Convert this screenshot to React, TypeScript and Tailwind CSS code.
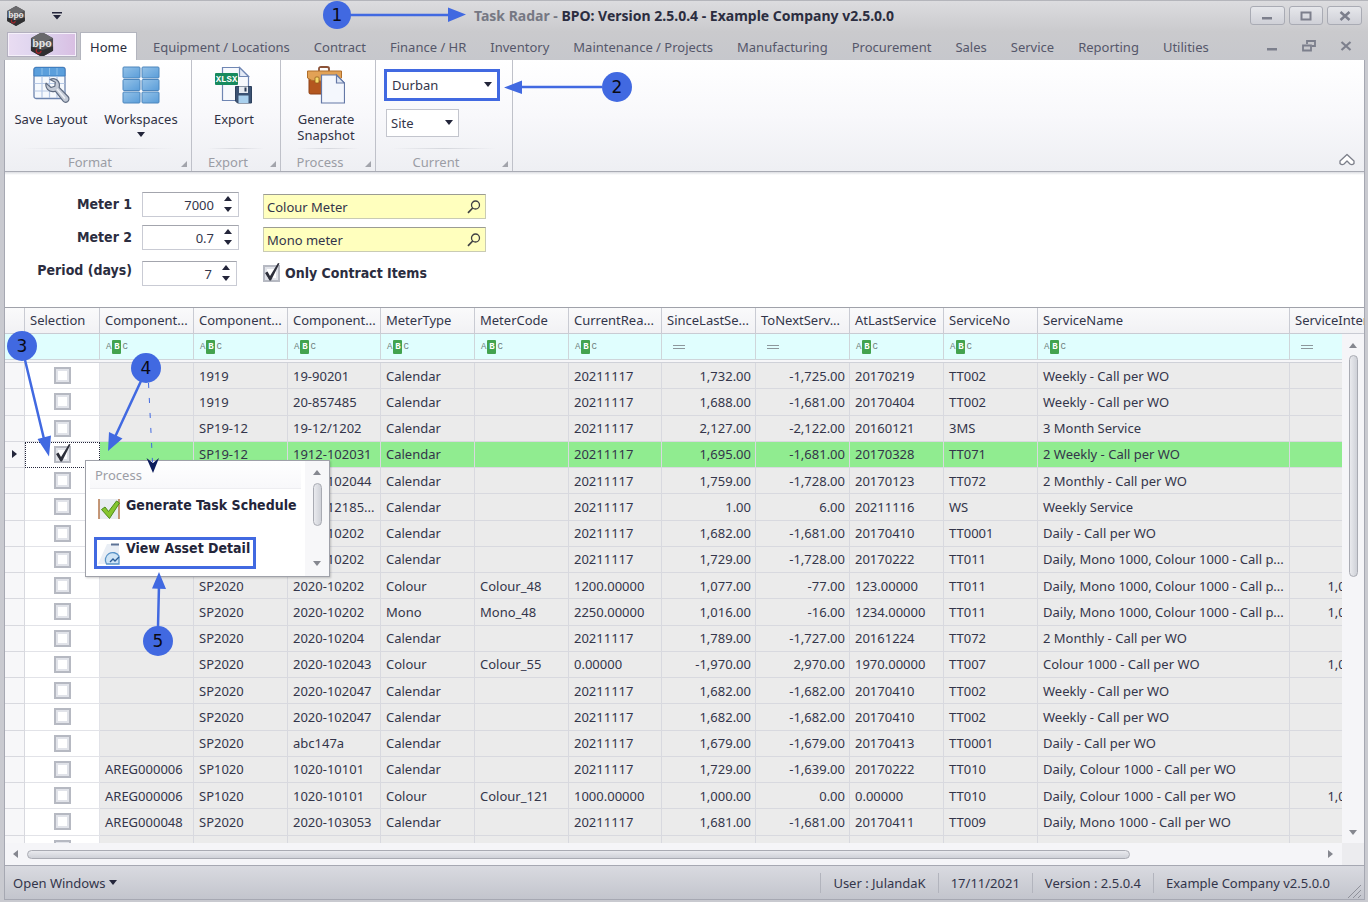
import { useState } from "react";
import type { ReactNode } from "react";
import clsx from "clsx";

type Row = {
  asset: string;
  part: string;
  serial: string;
  type: string;
  code: string;
  reading: string;
  since: string;
  next: string;
  last: string;
  serviceNo: string;
  serviceName: string;
  interval: string;
};

const TABS = [
  "Equipment / Locations",
  "Contract",
  "Finance / HR",
  "Inventory",
  "Maintenance / Projects",
  "Manufacturing",
  "Procurement",
  "Sales",
  "Service",
  "Reporting",
  "Utilities",
];

type Column = { label: string; width: string; filter?: "text" | "number" };

const COLUMNS: Column[] = [
  { label: "", width: "w-5" },
  { label: "Selection", width: "w-[75px]" },
  { label: "Component...", width: "w-[94px]", filter: "text" },
  { label: "Component...", width: "w-[94px]", filter: "text" },
  { label: "Component...", width: "w-[93px]", filter: "text" },
  { label: "MeterType", width: "w-[94px]", filter: "text" },
  { label: "MeterCode", width: "w-[94px]", filter: "text" },
  { label: "CurrentRea...", width: "w-[93px]", filter: "text" },
  { label: "SinceLastSe...", width: "w-[94px]", filter: "number" },
  { label: "ToNextServ...", width: "w-[94px]", filter: "number" },
  { label: "AtLastService", width: "w-[94px]", filter: "text" },
  { label: "ServiceNo", width: "w-[94px]", filter: "text" },
  { label: "ServiceName", width: "w-[252px]", filter: "text" },
  { label: "ServiceInterval", width: "w-[94px]", filter: "number" },
];

function row(...v: string[]): Row {
  const [asset, part, serial, type, code, reading, since, next, last, serviceNo, serviceName, interval = ""] = v;
  return { asset, part, serial, type, code, reading, since, next, last, serviceNo, serviceName, interval };
}

const LONG_NAME = "Daily, Mono 1000, Colour 1000 - Call p...";

const ROWS: Row[] = [
  row("", "1919", "19-90201", "Calendar", "", "20211117", "1,732.00", "-1,725.00", "20170219", "TT002", "Weekly - Call per WO"),
  row("", "1919", "20-857485", "Calendar", "", "20211117", "1,688.00", "-1,681.00", "20170404", "TT002", "Weekly - Call per WO"),
  row("", "SP19-12", "19-12/1202", "Calendar", "", "20211117", "2,127.00", "-2,122.00", "20160121", "3MS", "3 Month Service"),
  row("", "SP19-12", "1912-102031", "Calendar", "", "20211117", "1,695.00", "-1,681.00", "20170328", "TT071", "2 Weekly - Call per WO"),
  row("", "SP19-12", "1912-102044", "Calendar", "", "20211117", "1,759.00", "-1,728.00", "20170123", "TT072", "2 Monthly - Call per WO"),
  row("", "SP19-12", "1912-12185...", "Calendar", "", "20211117", "1.00", "6.00", "20211116", "WS", "Weekly Service"),
  row("", "SP2020", "2020-10202", "Calendar", "", "20211117", "1,682.00", "-1,681.00", "20170410", "TT0001", "Daily - Call per WO"),
  row("", "SP2020", "2020-10202", "Calendar", "", "20211117", "1,729.00", "-1,728.00", "20170222", "TT011", LONG_NAME),
  row("", "SP2020", "2020-10202", "Colour", "Colour_48", "1200.00000", "1,077.00", "-77.00", "123.00000", "TT011", LONG_NAME, "1,000.00"),
  row("", "SP2020", "2020-10202", "Mono", "Mono_48", "2250.00000", "1,016.00", "-16.00", "1234.00000", "TT011", LONG_NAME, "1,000.00"),
  row("", "SP2020", "2020-10204", "Calendar", "", "20211117", "1,789.00", "-1,727.00", "20161224", "TT072", "2 Monthly - Call per WO"),
  row("", "SP2020", "2020-102043", "Colour", "Colour_55", "0.00000", "-1,970.00", "2,970.00", "1970.00000", "TT007", "Colour 1000 - Call per WO", "1,000.00"),
  row("", "SP2020", "2020-102047", "Calendar", "", "20211117", "1,682.00", "-1,682.00", "20170410", "TT002", "Weekly - Call per WO"),
  row("", "SP2020", "2020-102047", "Calendar", "", "20211117", "1,682.00", "-1,682.00", "20170410", "TT002", "Weekly - Call per WO"),
  row("", "SP2020", "abc147a", "Calendar", "", "20211117", "1,679.00", "-1,679.00", "20170413", "TT0001", "Daily - Call per WO"),
  row("AREG000006", "SP1020", "1020-10101", "Calendar", "", "20211117", "1,729.00", "-1,639.00", "20170222", "TT010", "Daily, Colour 1000 - Call per WO"),
  row("AREG000006", "SP1020", "1020-10101", "Colour", "Colour_121", "1000.00000", "1,000.00", "0.00", "0.00000", "TT010", "Daily, Colour 1000 - Call per WO", "1,000.00"),
  row("AREG000048", "SP2020", "2020-103053", "Calendar", "", "20211117", "1,681.00", "-1,681.00", "20170411", "TT009", "Daily, Mono 1000 - Call per WO"),
  row("", "", "", "Calendar", "", "", "", "", "", "", "2 Weekly, Mono 1000 - Call per WO"),
];

const Caret = ({ className, dir = "down" }: { className?: string; dir?: "up" | "down" | "left" | "right" }) => {
  const paths = {
    down: "M0 1h8L4 6z",
    up: "M0 6h8L4 1z",
    left: "M6 0v8L1 4z",
    right: "M1 0v8l5-4z",
  };
  return (
    <svg viewBox="0 0 8 8" className={clsx("h-2 w-2 shrink-0", className)} fill="currentColor" aria-hidden="true">
      <path d={paths[dir]} />
    </svg>
  );
};

const HexLogo = ({ className }: { className?: string }) => (
  <svg viewBox="0 0 24 26" className={className} aria-hidden="true">
    <path d="M12 0 23.500 6.500v13L12 26 .5 19.500v-13z" fill="#4a4a4d" />
    <path d="M12 0 23.500 6.500 12 11 .5 6.500z" fill="#69696c" />
    <path d="M.5 15 12 19l11.500-4v4.500L12 26 .5 19.500z" fill="#2f2f31" />
    <path d="M7 17.500a2.500 2.500 0 1 0 4 2" stroke="#a3262c" strokeWidth="1.500" fill="none" />
    <text x="12" y="15.500" textAnchor="middle" fontSize="11" fontWeight="700" fill="#e3e3e3" fontFamily="Liberation Sans, sans-serif">
      bpo
    </text>
    <path d="M3 12.500h18" stroke="#e3e3e3" strokeWidth=".8" />
  </svg>
);

const SaveLayoutIcon = () => (
  <svg viewBox="0 0 38 38" className="h-[38px] w-[38px]" aria-hidden="true">
    <rect x="2" y="1.500" width="31" height="31" rx="2" fill="#f6f9fd" stroke="#6d84ae" strokeWidth="1.300" />
    <path d="M2 3.500a2 2 0 0 1 2-2h27a2 2 0 0 1 2 2V10H2z" fill="#5b9fdc" stroke="#3f7fc0" />
    <path d="M10 2v7M17.500 2v7M25 2v7" stroke="#8dc0ea" />
    <path d="M10 10.500V32M17.500 10.500V32M25 10.500V32M2.500 17.500h30M2.500 25h30" stroke="#b7c9e6" strokeWidth="1.200" />
    <path
      d="M18 13.500c3-1.500 6.500-.8 8.300 1.800 1.300 2 1.400 4 .8 6L36 30.500c1.500 1.800 1 4-.3 5-1.400 1-3.400.8-4.700-.7l-7.700-9.600c-2.800.9-5.800.4-7.800-1.800-1.500-1.700-2-4-1.400-6.300l4.900 4.400 3.800-1.300.5-4z"
      fill="#c3cad6"
      stroke="#5f6b80"
      strokeWidth="1.200"
      strokeLinejoin="round"
    />
    <path d="m25 23 8 9.500" stroke="#eef1f6" strokeWidth="1.500" />
  </svg>
);

const WorkspacesIcon = () => (
  <svg viewBox="0 0 38 38" className="h-[38px] w-[38px]" aria-hidden="true">
    <defs>
      <linearGradient id="tile" x1="0" y1="0" x2="1" y2="1">
        <stop offset="0" stopColor="#94c2e8" />
        <stop offset="1" stopColor="#5a9dd9" />
      </linearGradient>
    </defs>
    {[1, 13.5, 26].map((y) =>
      [1, 20].map((x) => (
        <rect key={`${x}-${y}`} x={x} y={y} width="17" height="11" rx="1" fill="url(#tile)" stroke="#4d86bd" />
      )),
    )}
  </svg>
);

const ExportIcon = () => (
  <svg viewBox="0 0 38 38" className="h-[38px] w-[38px]" aria-hidden="true">
    <path d="M7.500 1.500h17l9 9v24h-26z" fill="#f7f9fd" stroke="#6f86b3" strokeWidth="1.200" />
    <path d="M24.500 1.500v9h9z" fill="#e3eaf6" stroke="#6f86b3" strokeWidth="1.200" />
    <rect x="0" y="7" width="23" height="12" rx="1" fill="#178a5e" />
    <text x="11.500" y="16.300" textAnchor="middle" fontSize="9" fontWeight="700" fill="#fff" fontFamily="Liberation Mono, monospace">
      XLSX
    </text>
    <path d="M20.500 20.500h16v16.500h-14l-2-2z" fill="#3b5273" stroke="#2d405d" />
    <rect x="24" y="20.500" width="9" height="6.500" fill="#e7ebf1" />
    <rect x="29.500" y="21.500" width="2" height="4" fill="#2b3b55" />
    <rect x="23.500" y="29.500" width="10" height="7.500" fill="#a9d0ee" />
  </svg>
);

const SnapshotIcon = () => (
  <svg viewBox="0 0 38 38" className="h-[38px] w-[38px]" aria-hidden="true">
    <path d="M12 5V2.500Q12 1 14 1h6q2 0 2 1.500V5" fill="none" stroke="#8b5237" strokeWidth="1.800" />
    <rect x="2" y="10" width="31" height="18" rx="1.500" fill="#b4571f" stroke="#8e4318" />
    <path d="M.5 5h34v7q-4 3-9 3H10q-6 0-9.500-3z" fill="#e2a256" stroke="#b06f2c" />
    <rect x="8" y="11" width="4" height="6" rx="1" fill="#f7d968" stroke="#8e5a1c" strokeWidth=".8" />
    <path d="M14.500 9h15l8 8v20h-23z" fill="#f4f7fd" stroke="#6478a6" strokeWidth="1.200" />
    <path d="M29.500 9v8h8z" fill="#dfe7f5" stroke="#6478a6" strokeWidth="1.200" />
  </svg>
);

const SearchIcon = () => (
  <svg viewBox="0 0 14 14" className="h-[14px] w-[14px]" fill="none" stroke="#3f4043" aria-hidden="true">
    <circle cx="8.500" cy="5" r="4" strokeWidth="1.300" />
    <path d="M5.700 8 1 12.800" strokeWidth="1.700" />
  </svg>
);

const ScheduleIcon = () => (
  <svg viewBox="0 0 22 22" className="h-[22px] w-[22px]" aria-hidden="true">
    <rect x="1" y="1" width="20" height="20" fill="#e8ecf1" />
    <path d="M1 1v20M21 1v20" stroke="#b4774c" strokeWidth="1.500" />
    <path d="m3.500 11.500 3.500-2.500 3.500 4.500L18.500 3l3 2-10 15.500z" fill="#86c52f" stroke="#4c8a1c" strokeLinejoin="round" />
  </svg>
);

const AssetIcon = () => (
  <svg viewBox="0 0 22 22" className="h-[22px] w-[22px]" aria-hidden="true">
    <path d="M0 21 9 1h12v20z" fill="#e9eef5" />
    <path d="M13 1.500h8" stroke="#5d7396" strokeWidth="2" />
    <path d="M8.500 21a7 7 0 0 1 12.500-8v8z" fill="#cfe4f5" stroke="#5a94c8" strokeWidth="1.300" />
    <path d="m12 19 3-3 2 2 4-4" stroke="#2c5e98" strokeWidth="1.300" fill="none" />
  </svg>
);

const RibbonGroup = ({ title, width, children }: { title: string; width: string; children: ReactNode }) => (
  <section className={clsx("relative flex shrink-0 flex-col border-r border-[#bfc1c9]", width)} aria-label={title}>
    <div className="flex flex-1 items-start justify-center pt-[6px] pr-1">{children}</div>
    <div className="mx-4 h-px bg-linear-to-r from-transparent via-[#d4d6dc] to-transparent" />
    <h2 className="h-[22px] pr-4 text-center leading-[26px] text-[#9b9da5]">{title}</h2>
    <svg viewBox="0 0 6 6" className="absolute right-1 bottom-1 h-[6px] w-[6px]" aria-hidden="true">
      <path d="M6 0v6H0z" fill="#a2a4ab" />
    </svg>
  </section>
);

const RibbonButton = ({ icon, label, menu }: { icon: ReactNode; label: string; menu?: boolean }) => (
  <button type="button" className="flex w-[90px] flex-col items-center">
    {icon}
    <span className="mt-[7px] leading-4 whitespace-pre text-[#2f3144]">{label}</span>
    {menu && <Caret className="mt-1 text-[#23253a]" />}
  </button>
);

const Spinner = ({ id, initial, narrow }: { id: string; initial: string; narrow?: boolean }) => {
  const [value, setValue] = useState(initial);
  const step = (by: number) => setValue(String(Number(value) + by));
  return (
    <div
      className={clsx(
        "flex h-[25px] border border-[#c9cbd4] border-t-[#a3a5ad] bg-white",
        narrow ? "mt-[3px] w-[95px]" : "w-[97px]",
      )}
    >
      <input
        id={id}
        value={value}
        onChange={(e) => setValue(e.target.value)}
        className="w-full min-w-0 text-right outline-none"
      />
      <div className="flex w-6 shrink-0 flex-col items-center justify-between py-[2px] pl-1 text-[#23253a]">
        <button type="button" aria-label="Increase" onClick={() => step(1)}>
          <Caret dir="up" className="block" />
        </button>
        <button type="button" aria-label="Decrease" onClick={() => step(-1)}>
          <Caret className="block" />
        </button>
      </div>
    </div>
  );
};

const Lookup = ({ value, label }: { value: string; label: string }) => (
  <div className="flex h-[25px] items-center border border-[#c9cbb4] border-t-[#9b9c93] bg-[#ffffbe] pr-1">
    <input aria-label={label} defaultValue={value} className="w-full min-w-0 bg-transparent pl-[3px] outline-none" />
    <button type="button" aria-label={`Find ${label}`}>
      <SearchIcon />
    </button>
  </div>
);

const CheckBox = ({ id, label, checked }: { id?: string; label?: string; checked?: boolean }) => (
  <span className="relative inline-block h-[17px] w-[17px] align-middle">
    <input
      id={id}
      type="checkbox"
      aria-label={label}
      defaultChecked={checked}
      className="peer block h-[17px] w-[17px] appearance-none border-2 border-[#b6b9c2] bg-white inset-ring-2 inset-ring-[#e1e3e9]"
    />
    <svg viewBox="0 0 17 19" className="pointer-events-none absolute -top-[2px] left-0 hidden h-[19px] w-[17px] peer-checked:block" aria-hidden="true">
      <path d="m2 10 2.500-1.500L7 13 15 0l1.500.5L8 17.500H6.500z" fill="#2d2f3a" />
    </svg>
  </span>
);

const FilterMark = ({ kind }: { kind: "text" | "number" }) =>
  kind === "text" ? (
    <span className="flex items-center gap-px pl-px font-['Liberation_Mono',monospace] text-[9px] leading-[14px] text-[#6f7f80]">
      <span>A</span>
      <span className="w-[9px] rounded-[1px] bg-[#43a34f] text-center font-bold text-white">B</span>
      <span>C</span>
    </span>
  ) : (
    <svg viewBox="0 0 12 6" className="ml-[6px] h-[6px] w-3" stroke="#8d979c" aria-hidden="true">
      <path d="M0 1.500h12M0 4.500h12" />
    </svg>
  );

const MeterGrid = () => {
  const cell = "truncate border-r border-b border-[#d8d9df] px-[5px] py-0";
  const numberCell = "truncate border-r border-b border-[#d8d9df] py-0 pr-1 pl-[5px] text-right";
  const [current, setCurrent] = useState(3);
  return (
    <div className="relative min-h-0 flex-1 overflow-hidden border-t border-[#a0a2aa]">
      <table className="h-[554px] w-[1379px] table-fixed border-separate border-spacing-0">
        <colgroup>
          {COLUMNS.map((c, i) => (
            <col key={i} className={c.width} />
          ))}
        </colgroup>
        <thead>
          <tr className="h-[26px] bg-linear-to-b from-[#fafafb] to-[#f1f1f4]">
            {COLUMNS.map((c, i) => (
              <th
                key={i}
                scope="col"
                className="overflow-hidden border-r border-b border-[#c9cbd3] p-0 pb-[2px] pl-[5px] text-left font-normal"
              >
                {c.label}
              </th>
            ))}
          </tr>
          <tr className="h-[26px] bg-[#e0fefe]">
            {COLUMNS.map((c, i) => (
              <td key={i} className="border-r border-b border-[#cfd5da] p-0 pl-[5px]">
                {c.filter && <FilterMark kind={c.filter} />}
              </td>
            ))}
          </tr>
          <tr className="h-[3px]">
            <td colSpan={COLUMNS.length} className="h-[3px] border-b border-[#cfd1d8] bg-[#f6f6f8] p-0" />
          </tr>
        </thead>
        <tbody>
          {ROWS.map((r, i) => (
            <tr key={i} onClick={() => setCurrent(i)} className={current === i ? "bg-[#90ec90]" : "bg-[#ebebeb]"}>
              <td className="border-r border-b border-[#d8d9df] bg-[#f7f7f9] p-0">
                {current === i && <Caret dir="right" className="mx-auto block text-[#23253a]" />}
              </td>
              <td
                className={clsx(
                  "bg-white p-0 pb-px text-center leading-[17px]",
                  current === i ? "border border-dotted border-[#23253a]" : "border-r border-b border-[#e2e3e8]",
                )}
              >
                <CheckBox label={`Select row ${i + 1}`} checked={i === 3} />
              </td>
              <td className={cell}>{r.asset}</td>
              <td className={cell}>{r.part}</td>
              <td className={cell}>{r.serial}</td>
              <td className={cell}>{r.type}</td>
              <td className={cell}>{r.code}</td>
              <td className={cell}>{r.reading}</td>
              <td className={numberCell}>{r.since}</td>
              <td className={numberCell}>{r.next}</td>
              <td className={cell}>{r.last}</td>
              <td className={cell}>{r.serviceNo}</td>
              <td className={cell}>{r.serviceName}</td>
              <td className={numberCell}>{r.interval}</td>
            </tr>
          ))}
        </tbody>
      </table>

      {/* Scroll bars */}
      <div className="absolute top-[26px] right-0 bottom-0 flex w-[22px] flex-col items-center bg-[#f5f5f8] pt-2 text-[#85878f]">
        <Caret dir="up" />
        <div className="mt-[5px] h-[222px] w-[9px] rounded-full border border-[#a9abb3] bg-linear-to-r from-[#e9eaee] to-[#cfd1d8]" />
        <Caret className="mt-auto mb-7" />
      </div>
      <div className="absolute right-[22px] bottom-0 left-0 flex h-[22px] items-center bg-[#f5f5f8] px-[7px] text-[#85878f]">
        <Caret dir="left" />
        <div className="mr-auto ml-[7px] h-[9px] w-5/6 rounded-full border border-[#a9abb3] bg-linear-to-b from-[#e9eaee] to-[#cfd1d8]" />
        <Caret dir="right" />
      </div>
      <div className="absolute right-0 bottom-0 h-[22px] w-[22px] bg-[#ececef]" />
    </div>
  );
};

const ProcessMenu = () => (
  <div className="absolute top-[460px] left-[85px] flex h-[117px] w-[245px] border border-[#9fa1a9] bg-white shadow-[1px_1px_2px_rgba(0,0,0,0.2)]">
    <div className="min-w-0 flex-1">
      <h3 className="mx-1 h-7 border-b border-[#eeeef1] bg-linear-to-b from-white to-[#f8f8fa] pl-[5px] leading-7 text-[#9b9da5]">
        Process
      </h3>
      <button type="button" className="mt-1 ml-3 flex h-6 items-center gap-[6px] font-bold whitespace-nowrap text-[#23253a]">
        <span className="pt-2">
          <ScheduleIcon />
        </span>
        <span className="font-['DejaVu_Sans_Condensed','Noto_Sans',sans-serif] text-[14px]">Generate Task Schedule</span>
      </button>
      <button
        type="button"
        className="mt-5 ml-2 flex h-8 w-[162px] items-start gap-[6px] border-3 border-[#4169e1] bg-white pl-px font-bold whitespace-nowrap text-[#23253a]"
      >
        <span className="pt-[3px]">
          <AssetIcon />
        </span>
        <span className="font-['DejaVu_Sans_Condensed','Noto_Sans',sans-serif] text-[14px] leading-[17px]">View Asset Detail</span>
      </button>
    </div>
    <div className="flex w-6 shrink-0 flex-col items-center bg-[#f7f7f9] py-2 text-[#85878f]">
      <Caret dir="up" />
      <div className="mt-[6px] h-[43px] w-[9px] rounded-full border border-[#a9abb3] bg-linear-to-r from-[#e9eaee] to-[#cfd1d8]" />
      <Caret className="mt-auto" />
    </div>
  </div>
);

const MARKERS = [
  { n: 1, x: 337, y: 15, r: 14 },
  { n: 2, x: 617, y: 87, r: 15 },
  { n: 3, x: 22, y: 346, r: 15 },
  { n: 4, x: 146, y: 368, r: 15 },
  { n: 5, x: 158, y: 641, r: 15 },
];

// Numbered callouts drawn over the window
const Callouts = () => (
  <svg viewBox="0 0 1368 902" className="pointer-events-none absolute top-0 left-0 h-[902px] w-[1368px]" fill="#4169e1" aria-hidden="true">
    <g stroke="#4169e1" strokeWidth="2.500">
      <path d="M350 15h100M602 87h-84M25 360l19 79M141 381l-26 56M158 627l1-42" fill="none" />
    </g>
    <path d="M448 7.500 466 14.500 448 22zM522 80.500 504 87.500 522 94zM37.500 439 51 435.500 49 456.500zM109 432 122.500 438.500 108 451zM152 588.500 166 589 159 572z" />
    <path d="M148.500 383 152.500 462" fill="none" stroke="#4169e1" strokeDasharray="5 10" />
    <path d="m146.500 458 6.500 15 6-15-6 5z" fill="#0c1c5c" />
    {MARKERS.map((m) => (
      <g key={m.n}>
        <circle cx={m.x} cy={m.y} r={m.r} />
        <text x={m.x} y={m.y + 6} textAnchor="middle" fontSize="17" fill="#0a0a14" fontFamily="DejaVu Sans, sans-serif">
          {m.n}
        </text>
      </g>
    ))}
  </svg>
);

const App = () => {
  const windowButton =
    "flex h-[19px] w-[35px] items-center justify-center rounded-[3px] border border-[#a9abb4] bg-linear-to-b from-[#e6e7eb] to-[#cfd0d7] text-[#7c7f8c]";
  return (
    <div className="relative flex h-screen min-h-[902px] flex-col overflow-hidden bg-[#c9cad0] font-['Noto_Sans','DejaVu_Sans',sans-serif] text-[13px] leading-5 text-[#33354a]">
      {/* Title bar */}
      <header className="flex h-8 shrink-0 items-center justify-between border-t border-[#b4b5bb] bg-linear-to-b from-[#dcdcdf] to-[#cacacd] px-[6px] pb-[2px]">
        <div className="flex w-28 items-center">
          <HexLogo className="h-5 w-5" />
          <svg viewBox="0 0 10 8" className="ml-[26px] h-2 w-[10px]" fill="#23253a" aria-hidden="true">
            <path d="M0 0h10v1.500H0zM1 3h8L5 7.500z" />
          </svg>
        </div>
        <h1 className="text-[14px] font-bold text-[#2b2d40]">
          <span className="text-[#767883]">Task Radar - </span>BPO: Version 2.5.0.4 - Example Company v2.5.0.0
        </h1>
        <div className="flex w-28 justify-end gap-1">
          <button type="button" aria-label="Minimize" className={windowButton}>
            <svg viewBox="0 0 12 10" className="h-[10px] w-3">
              <path d="M1 6h10v2.500H1z" fill="currentColor" />
            </svg>
          </button>
          <button type="button" aria-label="Maximize" className={windowButton}>
            <svg viewBox="0 0 12 10" className="h-[10px] w-3" fill="none" stroke="currentColor" strokeWidth="2">
              <rect x="1.500" y="1.500" width="9" height="7" />
            </svg>
          </button>
          <button type="button" aria-label="Close" className={windowButton}>
            <svg viewBox="0 0 12 10" className="h-[10px] w-3" stroke="currentColor" strokeWidth="2.500">
              <path d="m1.500 1 9 8m0-8-9 8" />
            </svg>
          </button>
        </div>
      </header>

      {/* Ribbon tabs */}
      <nav className="flex h-7 shrink-0 items-center bg-linear-to-b from-[#cacacd] to-[#c6c7cc] pr-4 pl-2 whitespace-nowrap text-[#55576a]">
        <button
          type="button"
          aria-label="Application menu"
          className="mt-px mr-1 flex h-[23px] w-[68px] items-center justify-center self-start border border-[#f5f0fa] bg-linear-to-r from-[#e9dcf2] via-[#dcd3ee] to-[#d9bfe3] outline outline-[#b3b0bf]"
        >
          <HexLogo className="h-[25px] w-6" />
        </button>
        <a href="#home" className="mr-1 flex h-7 items-center border-x border-t border-[#b3b5be] bg-white px-[9px] text-[#2b2d40]">
          Home
        </a>
        {TABS.map((t) => (
          <a key={t} href={`#${t.split(" ")[0].toLowerCase()}`} className="px-3 pt-px">
            {t}
          </a>
        ))}
        <div className="ml-auto flex items-center gap-6 text-[#7c7f8c]">
          <button type="button" aria-label="Minimize document">
            <svg viewBox="0 0 12 12" className="block h-3 w-3">
              <path d="M1 8h10v2.500H1z" fill="currentColor" />
            </svg>
          </button>
          <button type="button" aria-label="Restore document">
            <svg viewBox="0 0 14 12" className="block h-3 w-[14px]" fill="none" stroke="currentColor" strokeWidth="1.800">
              <path d="M5 4V1h8v5h-3M1 5.500h8v5H1z" />
            </svg>
          </button>
          <button type="button" aria-label="Close document">
            <svg viewBox="0 0 12 12" className="block h-3 w-3" stroke="currentColor" strokeWidth="2.200">
              <path d="m1.500 2 9 8m0-8-9 8" />
            </svg>
          </button>
        </div>
      </nav>

      <div className="mr-[3px] ml-1 flex min-h-0 flex-1 flex-col border-x border-[#a6a8b2] bg-white">
        {/* Ribbon */}
        <div className="flex h-[112px] shrink-0 border-b border-[#a9abb4] bg-linear-to-b from-white via-[#f8f8fb] to-[#eeeff3]">
          <RibbonGroup title="Format" width="w-[187px]">
            <RibbonButton icon={<SaveLayoutIcon />} label="Save Layout" />
            <RibbonButton icon={<WorkspacesIcon />} label="Workspaces" menu />
          </RibbonGroup>
          <RibbonGroup title="Export" width="w-[89px]">
            <RibbonButton icon={<ExportIcon />} label="Export" />
          </RibbonGroup>
          <RibbonGroup title="Process" width="w-[95px]">
            <RibbonButton icon={<SnapshotIcon />} label={"Generate\nSnapshot"} />
          </RibbonGroup>
          <RibbonGroup title="Current" width="w-[137px]">
            <div className="flex w-[116px] flex-col gap-2 pt-[3px]">
              <div className="relative flex items-center">
                <select aria-label="Current branch" className="h-8 w-full appearance-none border-3 border-[#4169e1] bg-white pl-[5px] outline-none">
                  <option>Durban</option>
                </select>
                <Caret className="pointer-events-none absolute right-2 text-[#23253a]" />
              </div>
              <div className="relative ml-[2px] flex w-[73px] items-center">
                <select aria-label="Current site" className="h-7 w-full appearance-none border border-[#c3c5cd] bg-white pl-1 outline-none">
                  <option>Site</option>
                </select>
                <Caret className="pointer-events-none absolute right-[6px] text-[#23253a]" />
              </div>
            </div>
          </RibbonGroup>
          <button type="button" aria-label="Collapse ribbon" className="mt-auto mr-2 mb-1 ml-auto">
            <svg viewBox="0 0 18 14" className="block h-[14px] w-[18px]" fill="#fff" stroke="#7c7f8a" strokeWidth="1.300" strokeLinejoin="round">
              <path d="m9 1.500 7 6.500v2.500q-2 2-4 .5L9 8l-3 3q-2 1.500-4-.5V8z" />
            </svg>
          </button>
        </div>
        <div className="h-[3px] shrink-0 bg-linear-to-b from-[#dcdde2] to-white" />

        {/* Parameters */}
        <form className="flex h-[132px] shrink-0 pt-[17px]" onSubmit={(e) => e.preventDefault()}>
          <div className="flex w-[127px] flex-col gap-[9px] text-right font-['DejaVu_Sans_Condensed','Noto_Sans',sans-serif] text-[14px] leading-6 font-bold text-[#2b2d40]">
            <label htmlFor="meter1">Meter 1</label>
            <label htmlFor="meter2">Meter 2</label>
            <label htmlFor="period">Period (days)</label>
          </div>
          <div className="ml-[10px] flex flex-col gap-2">
            <Spinner id="meter1" initial="7000" />
            <Spinner id="meter2" initial="0.7" />
            <Spinner id="period" initial="7" narrow />
          </div>
          <div className="ml-6 flex w-[223px] flex-col gap-2 pt-[2px]">
            <Lookup label="Meter 1 type" value="Colour Meter" />
            <Lookup label="Meter 2 type" value="Mono meter" />
            <div className="flex h-[26px] items-center gap-[5px] font-['DejaVu_Sans_Condensed','Noto_Sans',sans-serif] text-[14px] font-bold text-[#2b2d40]">
              <CheckBox id="contract" checked />
              <label htmlFor="contract">Only Contract Items</label>
            </div>
          </div>
        </form>

        <MeterGrid />
      </div>

      {/* Status bar */}
      <footer className="mr-[3px] mb-[2px] ml-1 flex h-[35px] shrink-0 items-center border border-[#a6a8b2] bg-linear-to-b from-[#d9dae0] to-[#c3c5cd] pr-[2px] pl-2">
        <button type="button" className="flex items-center gap-1">
          Open Windows <Caret className="text-[#23253a]" />
        </button>
        <div className="ml-auto flex divide-x divide-[#b2b4bd] border-l border-[#b2b4bd]">
          <span className="px-3">User : JulandaK</span>
          <span className="px-3">17/11/2021</span>
          <span className="px-3">Version : 2.5.0.4</span>
          <span className="px-3">Example Company v2.5.0.0</span>
        </div>
        <svg viewBox="0 0 16 16" className="ml-1 h-4 w-4 self-end" stroke="#8f919a" aria-hidden="true">
          <path d="M2 15 15 2M7 15l8-8M12 15l3-3" />
        </svg>
      </footer>

      <ProcessMenu />
      <Callouts />
    </div>
  );
};

export default App;
